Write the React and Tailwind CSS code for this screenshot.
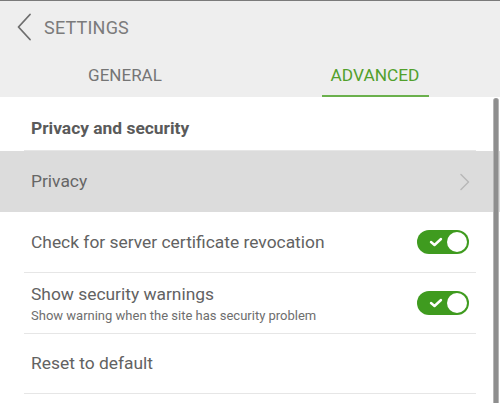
import React from "react";

function Toggle() {
  return (
    <div className="relative w-[52px] h-[24px] rounded-full bg-[#3f9b1f] shrink-0">
      <svg className="absolute left-[12px] top-[7px]" width="14" height="10" viewBox="0 0 14 10">
        <polyline points="2,5 5.5,8 12,2" fill="none" stroke="#ffffff" strokeWidth="2.4" strokeLinecap="round" strokeLinejoin="round" />
      </svg>
      <div className="absolute right-[2px] top-[2px] w-[20px] h-[20px] rounded-full bg-white" />
    </div>
  );
}

function Divider() {
  return <div className="mx-[24px] h-px bg-[#e6e6e6]" />;
}

export default function App() {
  return (
    <div className="relative w-[500px] h-[403px] overflow-hidden bg-white" style={{ fontFamily: "Roboto, 'Noto Sans', sans-serif" }}>
      <div className="h-px bg-[#7a7a7a]" />
      <div className="bg-[#eeeeee]">
        <div className="h-[52px] flex items-center pl-[17px]">
          <svg width="15" height="28" viewBox="0 0 15 28" className="shrink-0">
            <polyline points="13,1.5 1.5,14 13,26.5" fill="none" stroke="#6e6e6e" strokeWidth="1.8" strokeLinecap="round" strokeLinejoin="round" />
          </svg>
          <span className="ml-[12px] text-[18px] text-[#7b7b7b] tracking-[0.2px]">SETTINGS</span>
        </div>
        <div className="flex h-[44px]">
          <div className="flex-1 flex items-center justify-center">
            <span className="text-[17px] text-[#757575] pt-[1px]">GENERAL</span>
          </div>
          <div className="flex-1 flex justify-center">
            <div className="flex flex-col justify-between items-center">
              <span className="text-[17.3px] text-[#52a02c] pt-[12px] leading-[20px]">ADVANCED</span>
              <div className="w-[107px] h-[2px] bg-[#6ab04c]" />
            </div>
          </div>
        </div>
      </div>

      <div className="h-[53px] pl-[31px] pt-[20px]">
        <span className="text-[17.4px] font-bold text-[#5a5a5a] leading-[22px]">Privacy and security</span>
      </div>
      <Divider />
      <div className="h-[61px] bg-[#dcdcdc] flex items-center justify-between pl-[31px] pr-[30px]">
        <span className="text-[17.4px] text-[#666666]">Privacy</span>
        <svg width="11" height="18" viewBox="0 0 11 18">
          <polyline points="2,1.5 9.5,9 2,16.5" fill="none" stroke="#b8b8b8" strokeWidth="1.5" strokeLinecap="round" strokeLinejoin="round" />
        </svg>
      </div>
      <div className="h-[60px] flex items-center justify-between pl-[31px] pr-[31px]">
        <span className="text-[17.4px] text-[#626262]">Check for server certificate revocation</span>
        <Toggle />
      </div>
      <Divider />
      <div className="h-[60px] flex items-center justify-between pl-[31px] pr-[31px]">
        <div className="flex flex-col">
          <span className="text-[17.4px] text-[#626262] leading-[22px]">Show security warnings</span>
          <span className="text-[13px] text-[#6e6e6e] leading-[17px] mt-[2px]">Show warning when the site has security problem</span>
        </div>
        <Toggle />
      </div>
      <Divider />
      <div className="h-[59px] flex items-center pl-[31px]">
        <span className="text-[17.4px] text-[#626262]">Reset to default</span>
      </div>
      <Divider />

      <div className="absolute right-[1px] top-[98px] bottom-0 w-[6px] rounded-t-full bg-[#8e8e8e] border-x border-[#b5b5b5]" />
    </div>
  );
}
